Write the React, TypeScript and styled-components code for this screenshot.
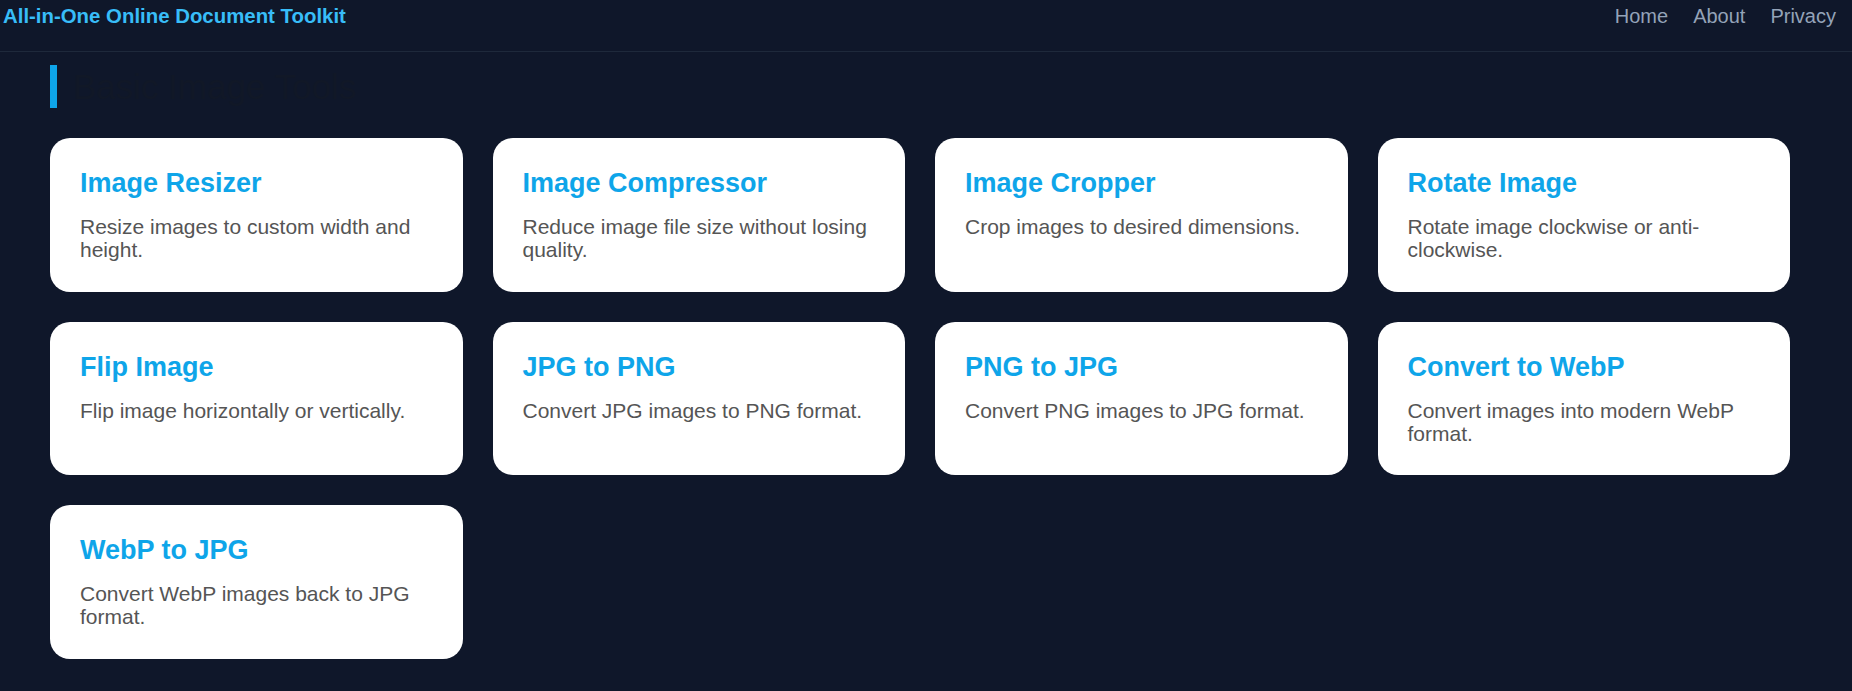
import React from "react";
import styled, { createGlobalStyle } from "styled-components";

const tools = [
  { title: "Image Resizer", text: "Resize images to custom width and height." },
  { title: "Image Compressor", text: "Reduce image file size without losing quality." },
  { title: "Image Cropper", text: "Crop images to desired dimensions." },
  { title: "Rotate Image", text: "Rotate image clockwise or anti-clockwise." },
  { title: "Flip Image", text: "Flip image horizontally or vertically." },
  { title: "JPG to PNG", text: "Convert JPG images to PNG format." },
  { title: "PNG to JPG", text: "Convert PNG images to JPG format." },
  { title: "Convert to WebP", text: "Convert images into modern WebP format." },
  { title: "WebP to JPG", text: "Convert WebP images back to JPG format." },
];

const App: React.FC = () => {
  return (
    <>
      <GlobalStyle />
      <Header>
        <Logo>All-in-One Online Document Toolkit</Logo>
        <Nav>
          <NavLink href="#">Home</NavLink>
          <NavLink href="#">About</NavLink>
          <NavLink href="#">Privacy</NavLink>
        </Nav>
      </Header>
      <Main>
        <SectionTitle>Basic Image Tools</SectionTitle>
        <Grid>
          {tools.map((tool) => (
            <Card key={tool.title}>
              <CardTitle>{tool.title}</CardTitle>
              <CardText>{tool.text}</CardText>
            </Card>
          ))}
        </Grid>
      </Main>
    </>
  );
};

export default App;

const GlobalStyle = createGlobalStyle`
  * {
    box-sizing: border-box;
  }
  body {
    margin: 0;
    background: #0f172a;
    font-family: "Liberation Sans", Arial, sans-serif;
  }
`;

const Header = styled.header`
  display: flex;
  justify-content: space-between;
  align-items: flex-start;
  height: 52px;
  padding: 5px 16px 0 3px;
  border-bottom: 1px solid #1e293b;
`;

const Logo = styled.div`
  font-size: 20.4px;
  font-weight: bold;
  color: #38bdf8;
`;

const Nav = styled.nav`
  display: flex;
  gap: 25px;
`;

const NavLink = styled.a`
  font-size: 20px;
  color: #94a3b8;
  text-decoration: none;
`;

const Main = styled.main`
  padding: 13px 62px 30px 50px;
`;

const SectionTitle = styled.h2`
  margin: 0 0 30px;
  padding-left: 16px;
  border-left: 7px solid #0ea5e9;
  font-size: 35px;
  font-weight: normal;
  line-height: 43px;
  color: #111827;
`;

const Grid = styled.div`
  display: grid;
  grid-template-columns: repeat(4, 1fr);
  gap: 30px;
`;

const Card = styled.div`
  background: #ffffff;
  border-radius: 20px;
  padding: 30px;
`;

const CardTitle = styled.h3`
  margin: 0 0 16px;
  font-size: 27px;
  font-weight: bold;
  color: #0ea5e9;
`;

const CardText = styled.p`
  margin: 0;
  font-size: 21px;
  line-height: 23.3px;
  color: #555555;
`;
